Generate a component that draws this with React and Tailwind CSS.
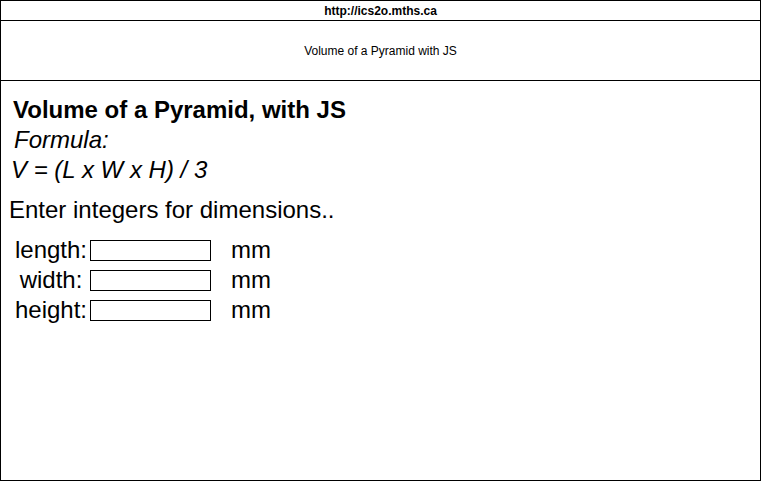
export default function App() {
  const rows = ["length:", "width:", "height:"];
  return (
    <div className="w-[761px] h-[481px] border border-black bg-white text-black font-['Liberation_Sans',Arial,sans-serif] flex flex-col">
      {/* top url bar */}
      <div className="h-[20px] border-b border-black flex items-center justify-center text-[12px] font-bold leading-none">
        http://ics2o.mths.ca
      </div>
      {/* page title bar */}
      <div className="h-[60px] border-b border-black flex items-center justify-center text-[12px] leading-none">
        Volume of a Pyramid with JS
      </div>

      <div className="pt-[14px] text-[24px] leading-[30px]">
        <h1 className="ml-[12px] font-bold">Volume of a Pyramid, with JS</h1>
        <p className="ml-[13px] italic">Formula:</p>
        <p className="ml-[10px] italic">V = (L x W x H) / 3</p>
        <p className="ml-[8px] mt-[10px]">Enter integers for dimensions..</p>

        <div className="mt-[10px] ml-[12px] flex flex-col">
          {rows.map((r) => (
            <div key={r} className="flex items-center h-[30px]">
              <span className="w-[76px] text-center">{r}</span>
              <input
                type="text"
                className="w-[121px] h-[21px] border border-black bg-white ml-[1px] outline-none"
              />
              <span className="ml-[20px]">mm</span>
            </div>
          ))}
        </div>
      </div>
    </div>
  );
}
